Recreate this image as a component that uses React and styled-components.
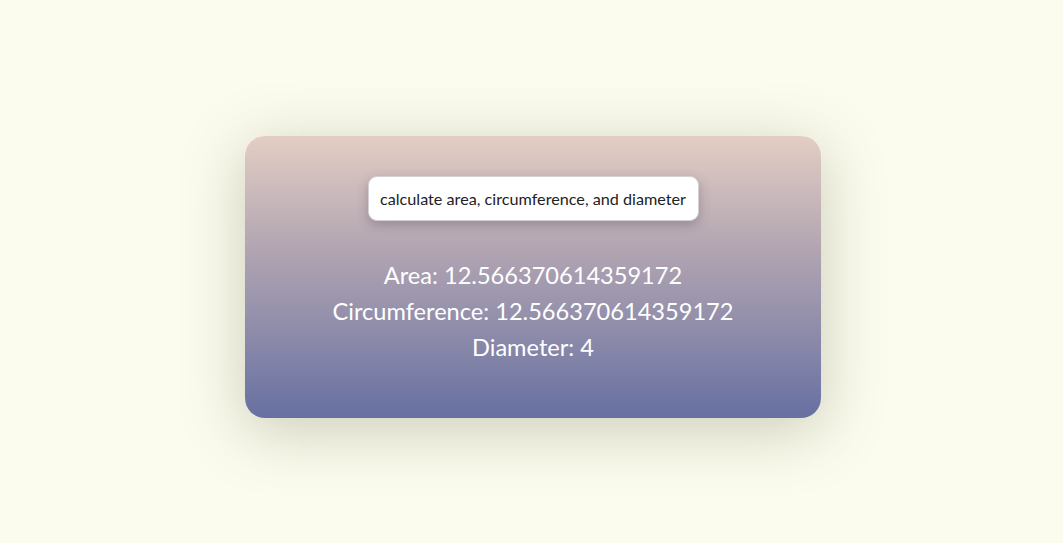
import React from 'react';
import styled, { createGlobalStyle } from 'styled-components';

const GlobalStyle = createGlobalStyle`
  html, body {
    margin: 0;
    padding: 0;
    background: #fbfbee;
  }
  body {
    font-family: "Lato", "Noto Sans", sans-serif;
  }
`;

const Page = styled.div`
  min-height: 543px;
  display: flex;
  justify-content: center;
  align-items: flex-start;
  padding: 136px 0 0 3px;
  box-sizing: border-box;
`;

const Card = styled.div`
  width: 576px;
  height: 282px;
  box-sizing: border-box;
  padding-top: 40px;
  border-radius: 20px;
  background: linear-gradient(180deg, #e3cec4 0%, #b2a5b2 40%, #8d8baa 70%, #6770a1 100%);
  box-shadow: 0 12px 60px rgba(120, 120, 90, 0.35);
  display: flex;
  flex-direction: column;
  align-items: center;
`;

const CalcButton = styled.button`
  height: 45px;
  width: 331px;
  background: #fff;
  border: 1px solid #d4d0d4;
  border-radius: 9px;
  box-shadow: 0 4px 12px rgba(60, 50, 70, 0.3);
  font-family: "Lato", "Noto Sans", sans-serif;
  font-size: 16.2px;
  color: #222;
  cursor: pointer;
  padding: 0;
`;

const Results = styled.div`
  margin-top: 36px;
  display: flex;
  flex-direction: column;
  align-items: center;
`;

const Line = styled.div`
  color: #fff;
  font-size: 23.6px;
  line-height: 36px;
`;

export default function App() {
  const r = 2;
  const area = Math.PI * r * r;
  const circumference = 2 * Math.PI * r;
  return (
    <>
      <GlobalStyle />
      <Page>
        <Card>
          <CalcButton>calculate area, circumference, and diameter</CalcButton>
          <Results>
            <Line>Area: {area}</Line>
            <Line>Circumference: {circumference}</Line>
            <Line>Diameter: {r * 2}</Line>
          </Results>
        </Card>
      </Page>
    </>
  );
}
